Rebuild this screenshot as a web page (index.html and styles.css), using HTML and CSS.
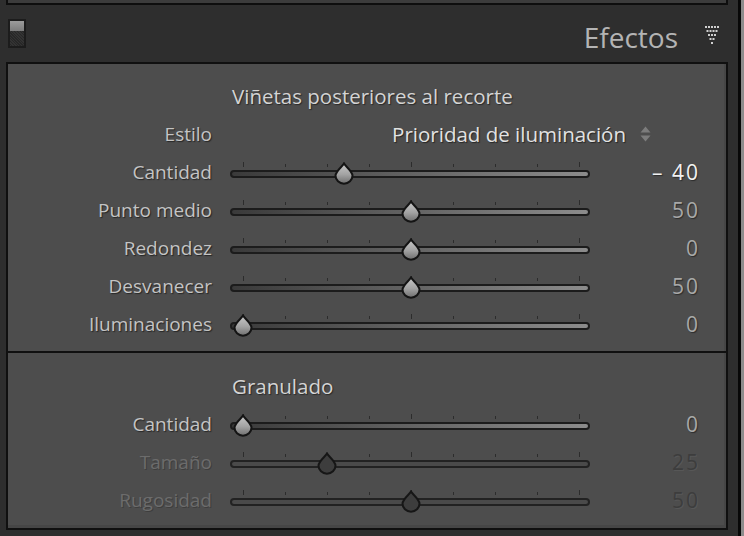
FILE: index.html
```html
<!DOCTYPE html>
<html lang="es">
<head>
  <meta charset="UTF-8">
  <meta name="viewport" content="width=device-width, initial-scale=1.0">
  <title>Efectos</title>
  <link rel="stylesheet" href="styles.css">
</head>
<body>
  <svg class="defs" aria-hidden="true">
    <defs>
      <linearGradient id="thumb-grad" x1="0" y1="0" x2="0" y2="1">
        <stop offset="0" stop-color="#c8c8c8"/>
        <stop offset="0.55" stop-color="#a2a2a2"/>
        <stop offset="1" stop-color="#6e6e6e"/>
      </linearGradient>
      <symbol id="thumb" viewBox="0 0 22 24">
        <path d="M11 1.5 C12.5 4.5 19 8.5 19.5 13.5 A8.5 8.2 0 0 1 2.5 13.5 C3 8.5 9.5 4.5 11 1.5 Z"/>
      </symbol>
    </defs>
  </svg>

  <div class="app">
    <div class="main">
      <div class="prev-panel"></div>

      <div class="header">
        <span class="toggle"><span class="toggle-on"></span><span class="toggle-off"></span></span>
        <h2 class="header-title">Efectos</h2>
        <svg class="header-arrow" viewBox="0 0 14 18" width="14" height="18">
          <g fill="#cfcfcf">
            <rect x="0" y="0" width="2" height="2"/><rect x="3" y="0" width="2" height="2"/><rect x="6" y="0" width="2" height="2"/><rect x="9" y="0" width="2" height="2"/><rect x="12" y="0" width="2" height="2"/>
            <rect x="1.5" y="4" width="2" height="2"/><rect x="4.5" y="4" width="2" height="2"/><rect x="7.5" y="4" width="2" height="2"/><rect x="10.5" y="4" width="2" height="2"/>
            <rect x="3" y="8" width="2" height="2"/><rect x="6" y="8" width="2" height="2"/><rect x="9" y="8" width="2" height="2"/>
            <rect x="4.5" y="12" width="2" height="2"/><rect x="7.5" y="12" width="2" height="2"/>
            <rect x="6" y="16" width="2" height="2"/>
          </g>
        </svg>
      </div>

      <div class="panel">
        <section class="group group-vignette">
          <h3 class="group-title">Viñetas posteriores al recorte</h3>

          <div class="row">
            <span class="label">Estilo</span>
            <div class="select">
              <span>Prioridad de iluminación</span>
              <svg class="select-arrows" viewBox="0 0 11 16" width="11" height="16">
                <path d="M0.5 6.5 L5.5 0.5 L10.5 6.5 Z M0.5 9.5 L10.5 9.5 L5.5 15.5 Z" fill="#7c7c7c"/>
              </svg>
            </div>
          </div>

          <div class="row">
            <span class="label">Cantidad</span>
            <div class="slider">
              <div class="ticks"><i class="major"></i><i></i><i></i><i></i><i class="major"></i><i></i><i></i><i></i><i class="major"></i></div>
              <div class="track"></div>
              <svg class="thumb" style="left: 103px"><use href="#thumb"/></svg>
            </div>
            <span class="value value-active">–&nbsp;40</span>
          </div>

          <div class="row">
            <span class="label">Punto medio</span>
            <div class="slider">
              <div class="ticks"><i class="major"></i><i></i><i></i><i></i><i class="major"></i><i></i><i></i><i></i><i class="major"></i></div>
              <div class="track"></div>
              <svg class="thumb" style="left: 170px"><use href="#thumb"/></svg>
            </div>
            <span class="value">50</span>
          </div>

          <div class="row">
            <span class="label">Redondez</span>
            <div class="slider">
              <div class="ticks"><i class="major"></i><i></i><i></i><i></i><i class="major"></i><i></i><i></i><i></i><i class="major"></i></div>
              <div class="track"></div>
              <svg class="thumb" style="left: 170px"><use href="#thumb"/></svg>
            </div>
            <span class="value">0</span>
          </div>

          <div class="row">
            <span class="label">Desvanecer</span>
            <div class="slider">
              <div class="ticks"><i class="major"></i><i></i><i></i><i></i><i class="major"></i><i></i><i></i><i></i><i class="major"></i></div>
              <div class="track"></div>
              <svg class="thumb" style="left: 170px"><use href="#thumb"/></svg>
            </div>
            <span class="value">50</span>
          </div>

          <div class="row">
            <span class="label">Iluminaciones</span>
            <div class="slider">
              <div class="ticks"><i class="major"></i><i></i><i></i><i></i><i class="major"></i><i></i><i></i><i></i><i class="major"></i></div>
              <div class="track"></div>
              <svg class="thumb" style="left: 2px"><use href="#thumb"/></svg>
            </div>
            <span class="value">0</span>
          </div>
        </section>

        <section class="group group-grain">
          <h3 class="group-title">Granulado</h3>

          <div class="row">
            <span class="label">Cantidad</span>
            <div class="slider">
              <div class="ticks"><i class="major"></i><i></i><i></i><i></i><i class="major"></i><i></i><i></i><i></i><i class="major"></i></div>
              <div class="track"></div>
              <svg class="thumb" style="left: 2px"><use href="#thumb"/></svg>
            </div>
            <span class="value">0</span>
          </div>

          <div class="row row-disabled">
            <span class="label">Tamaño</span>
            <div class="slider">
              <div class="ticks"><i class="major"></i><i></i><i></i><i></i><i class="major"></i><i></i><i></i><i></i><i class="major"></i></div>
              <div class="track"></div>
              <svg class="thumb" style="left: 86px"><use href="#thumb"/></svg>
            </div>
            <span class="value">25</span>
          </div>

          <div class="row row-disabled">
            <span class="label">Rugosidad</span>
            <div class="slider">
              <div class="ticks"><i class="major"></i><i></i><i></i><i></i><i class="major"></i><i></i><i></i><i></i><i class="major"></i></div>
              <div class="track"></div>
              <svg class="thumb" style="left: 170px"><use href="#thumb"/></svg>
            </div>
            <span class="value">50</span>
          </div>
        </section>
      </div>
    </div>
    <div class="scrollbar"></div>
  </div>
</body>
</html>
```

FILE: styles.css
```css
* {
  margin: 0;
  padding: 0;
  box-sizing: border-box;
}
body {
  width: 744px;
  height: 536px;
  overflow: hidden;
  background-color: #2e2e2e;
  font-family: "Open Sans", "Liberation Sans", sans-serif;
}
/* 只用来放渐变和滑块形状 */
.defs {
  position: absolute;
  width: 0;
  height: 0;
}
.app {
  display: flex;
  height: 536px;
}
.main {
  width: 738px;
}
.scrollbar {
  width: 6px;
  border-left: 3px solid #080808;
  background-color: #8c8c8c;
}

/* 上一个面板露出的底边 */
.prev-panel {
  height: 5px;
  margin: 0 10px 0 6px;
  background-color: #3c3c3c;
  border: 2px solid #0e0e0e;
  border-top: 0;
}

.header {
  display: flex;
  align-items: center;
  height: 57px;
  padding: 0 19px 0 8px;
}
.toggle {
  display: flex;
  flex-direction: column;
  width: 18px;
  height: 29px;
  padding: 2px;
  background-color: #1c1c1c;
}
.toggle-on {
  height: 10px;
  background: linear-gradient(#9c9c9c, #7c7c7c);
}
.toggle-off {
  flex: 1;
  background-color: #2c2c2c;
  background-image: repeating-linear-gradient(45deg, #333 0 1px, #272727 1px 2px);
}
.header-title {
  margin-left: auto;
  padding-top: 6px;
  font-size: 28px;
  font-weight: 400;
  color: #b4b4b4;
}
.header-arrow {
  margin: 3px 0 0 27px;
}

.panel {
  height: 468px;
  margin: 0 10px 0 6px;
  background-color: #4d4d4d;
  border: 2px solid #101010;
  box-shadow: inset -2px -3px 0 #464646;
}
.group-vignette {
  padding: 13px 0 8px;
}
.group-grain {
  padding-top: 14px;
  border-top: 2px solid #101010;
}
.group-title {
  height: 38px;
  line-height: 38px;
  margin-left: 224px;
  font-size: 20.5px;
  font-weight: 400;
  color: #d4d4d4;
  text-shadow: 1px 1px 1px #2a2a2a;
}

.row {
  display: flex;
  align-items: center;
  height: 38px;
  padding-right: 26px;
}
.label {
  width: 204px;
  text-align: right;
  font-size: 19px;
  color: #c4c4c4;
  text-shadow: 1px 1px 1px #262626;
}
.value {
  width: 110px;
  margin-right: -2px;
  text-align: right;
  font-size: 21px;
  letter-spacing: 2px;
  color: #a8a8a8;
  text-shadow: 1px 1px 1px #2c2c2c;
}
.value-active {
  color: #f2f2f2;
}

.select {
  display: flex;
  align-items: center;
  gap: 14px;
  margin-left: auto;
  margin-right: 49px;
  font-size: 20.5px;
  color: #e2e2e2;
  text-shadow: 1px 1px 1px #262626;
}

/* 滑块 */
.slider {
  position: relative;
  width: 360px;
  height: 38px;
  margin-left: 18px;
}
.ticks {
  display: flex;
  justify-content: space-between;
  align-items: flex-end;
  width: 337px;
  height: 5px;
  margin: 9px 0 0 13px;
}
.ticks i {
  width: 1px;
  height: 3px;
  background-color: #2c2c2c;
}
.ticks i.major {
  height: 5px;
}
.track {
  height: 8px;
  margin-top: 3px;
  border: 2px solid #1c1c1c;
  border-radius: 4px;
  background: linear-gradient(to right, #3a3a3a, #8c8c8c);
}
.thumb {
  position: absolute;
  top: 9px;
  width: 22px;
  height: 24px;
  fill: url(#thumb-grad);
  stroke: #141414;
  stroke-width: 2;
}

/* 不可用的行 */
.row-disabled .label {
  color: #6c6c6c;
  text-shadow: 1px 1px 0 #3e3e3e;
}
.row-disabled .value {
  color: #3d3d3d;
  text-shadow: 1px 1px 0 #575757;
}
.row-disabled .track {
  border-color: #222;
  background: #4a4a4a;
}
.row-disabled .thumb {
  fill: #3d3d3d;
  stroke: #161616;
}
```
